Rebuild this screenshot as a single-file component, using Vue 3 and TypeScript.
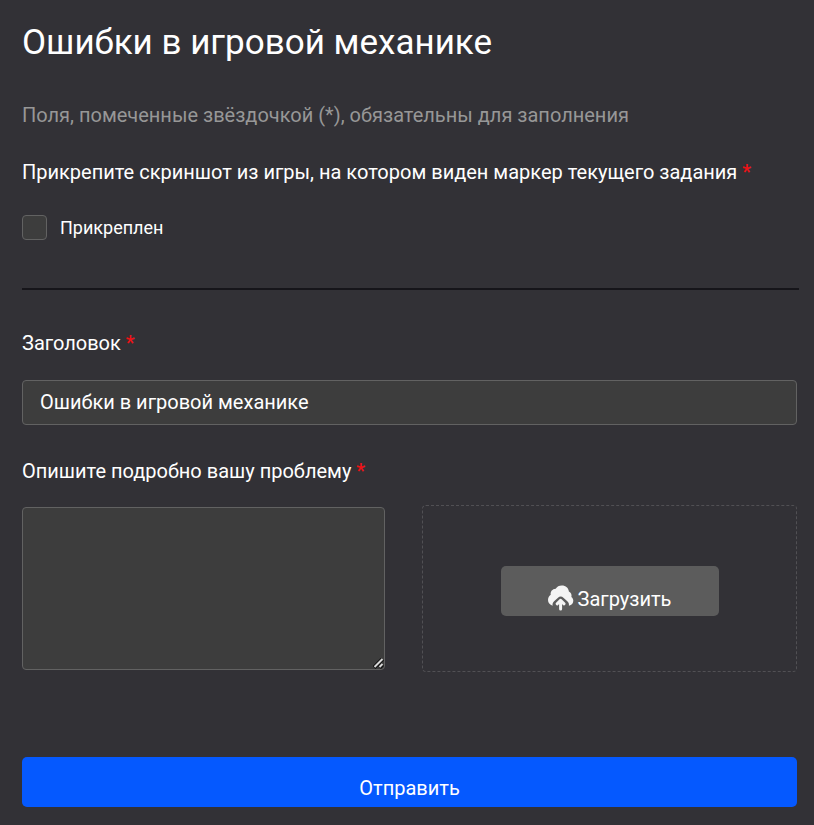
<script setup lang="ts">
import { ref } from 'vue'

const attached = ref(false)
const subject = ref('Ошибки в игровой механике')
const description = ref('')
const fileInput = ref<HTMLInputElement | null>(null)

function chooseFile(): void {
  fileInput.value?.click()
}
</script>

<template>
  <main class="page">
    <h1 class="title">Ошибки в игровой механике</h1>
    <p class="hint">Поля, помеченные звёздочкой (*), обязательны для заполнения</p>

    <form @submit.prevent>
      <fieldset class="group">
        <legend class="label">
          Прикрепите скриншот из игры, на котором виден маркер текущего задания
          <span class="required">*</span>
        </legend>
        <label class="check">
          <input v-model="attached" class="box" type="checkbox" />
          <span>Прикреплен</span>
        </label>
      </fieldset>

      <hr class="divider" />

      <label class="label" for="subject">Заголовок <span class="required">*</span></label>
      <input id="subject" v-model="subject" class="field subject" type="text" />

      <label class="label" for="description">Опишите подробно вашу проблему <span class="required">*</span></label>
      <div class="details">
        <div class="area-wrap">
          <textarea id="description" v-model="description" class="field area"></textarea>
          <svg class="grip" viewBox="0 0 11 11" aria-hidden="true">
            <path d="M1 9.5 9.5 1M6.5 9.5l3-3" stroke="#111" stroke-width="4" />
            <path d="M1.5 9 9.5 1M6.5 9l3-3" stroke="#d8d8d8" stroke-width="2" />
          </svg>
        </div>
        <div class="drop">
          <button class="button upload" type="button" @click="chooseFile">
            <svg class="cloud" viewBox="0 0 26 26" aria-hidden="true">
              <path
                fill="#f4f4f4"
                d="M4.6 20.8C1.8 20 0 17.8 0 15.1c0-2.5 1-4.3 2.7-5.4-.4-3.3 1.6-5.6 5-5.9C8.9 1.6 11.1.4 13.8.4c4 0 6.8 2.5 7.1 6.2 2.2 1 3.1 3 2.5 5.4 1.3 1 1.9 2.3 1.9 3.7 0 2.5-1.6 4.4-4.4 5.1.3-1.8-.2-3.2-1.6-4.5l-3.9-3.6c-1.6-1.5-3.8-1.5-5.4 0l-3.9 3.6c-1.3 1.3-1.8 2.7-1.5 4.5Z"
              />
              <path
                d="M12.6 24v-7.2M9.1 18.8l3.5-3.4 3.5 3.4"
                fill="none"
                stroke="#f4f4f4"
                stroke-width="3"
                stroke-linecap="round"
                stroke-linejoin="round"
              />
            </svg>
            <span>Загрузить</span>
          </button>
          <input ref="fileInput" type="file" hidden />
        </div>
      </div>

      <button class="button submit" type="submit">Отправить</button>
    </form>
  </main>
</template>

<style>
body {
  margin: 0;
  background: #323136;
}
</style>

<style scoped>
.page {
  padding: 21px 17px 18px 22px;
  color: #fff;
  font-family: Roboto, "Noto Sans", sans-serif;
  font-size: 20px;
  line-height: 24px;
}
.title {
  margin: 0 0 38px;
  font-size: 35px;
  font-weight: 400;
  line-height: 44px;
}
.hint {
  margin: 0 0 33px;
  color: #979797;
}
.group {
  min-width: 0;
  margin: 0;
  padding: 0;
  border: 0;
}
.label {
  display: block;
  padding: 0;
}
.required {
  color: #ee1216;
  font-weight: 500;
}
.check {
  display: flex;
  align-items: center;
  gap: 13px;
  width: fit-content;
  margin-top: 31px;
  font-size: 18px;
}
.box {
  appearance: none;
  box-sizing: border-box;
  width: 25px;
  height: 25px;
  margin: 0;
  border: 1px solid #626262;
  border-radius: 4px;
  background: #3d3d3d;
}
.box:checked {
  background: #0559ff;
}
.divider {
  height: 2px;
  margin: 48px -2px 41px 0;
  border: 0;
  background: #16151a;
}
.field {
  box-sizing: border-box;
  display: block;
  width: 100%;
  border: 1px solid #626262;
  border-radius: 4px;
  background: #3d3d3d;
  color: #fff;
  font: inherit;
}
.subject {
  height: 45px;
  margin: 25px 0 34px;
  padding: 0 17px 2px;
}
.details {
  display: grid;
  grid-template-columns: 363fr 375fr;
  align-items: center;
  gap: 37px;
  margin: 22px 0 85px;
}
.area-wrap {
  position: relative;
}
.area {
  height: 163px;
  padding: 10px 17px;
  resize: vertical;
}
.area::-webkit-resizer {
  background: transparent;
}
.grip {
  position: absolute;
  right: 1px;
  bottom: 1px;
  width: 11px;
  height: 11px;
  pointer-events: none;
}
.drop {
  box-sizing: border-box;
  display: flex;
  align-items: center;
  justify-content: center;
  height: 167px;
  padding-top: 4px;
  border: 1px dashed #515054;
  border-radius: 4px;
}
.button {
  box-sizing: border-box;
  display: flex;
  align-items: center;
  justify-content: center;
  height: 50px;
  padding: 12px 0 0;
  border: 0;
  border-radius: 5px;
  color: #fff;
  font: inherit;
  line-height: 24px;
  cursor: pointer;
}
.upload {
  align-items: flex-end;
  gap: 4px;
  width: 218px;
  padding: 0 0 5px;
  background: #5c5c5c;
}
.cloud {
  width: 26px;
  height: 26px;
}
.submit {
  width: 100%;
  background: #0559ff;
}
</style>
